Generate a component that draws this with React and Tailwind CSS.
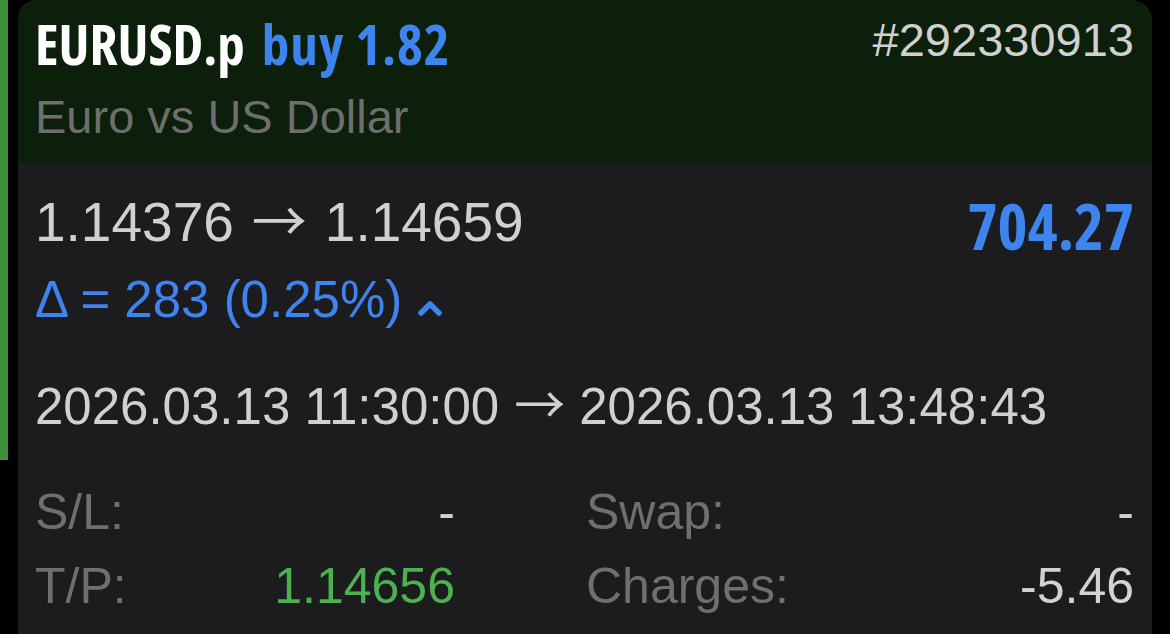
import React from 'react'

const sans = "font-['Liberation_Sans',Arial,sans-serif]"
const cond = "font-['Open_Sans','Noto_Sans',sans-serif] [font-stretch:78%]"

function Arrow({ className = 'mx-[18px]' }) {
  return <span className={`font-['Noto_Sans_CJK_JP',sans-serif] ${className}`}>→</span>
}

function Chevron() {
  return (
    <svg width="28" height="18" viewBox="0 0 28 18" className="ml-[14px] mb-[8px]">
      <polyline points="5,14 14,5 23,14" fill="none" stroke="#3d84ee" strokeWidth="5.5" strokeLinecap="round" strokeLinejoin="round" />
    </svg>
  )
}

function Row({ label, value, valueClass = 'text-[#d2d2d2]' }) {
  return (
    <div className="flex justify-between items-baseline">
      <span className="text-[#6f6f6f]">{label}</span>
      <span className={valueClass}>{value}</span>
    </div>
  )
}

export default function App() {
  return (
    <div className={`w-[1170px] h-[634px] bg-black flex overflow-hidden ${sans}`}>
      {/* side marker */}
      <div className="w-[8px] flex flex-col">
        <div className="h-[460px] bg-[#3e8f3a]" />
      </div>

      <div className="ml-[10px] w-[1134px] flex flex-col rounded-tl-[18px] rounded-tr-[20px] overflow-hidden">
        {/* Header */}
        <div className="h-[163px] bg-[#0b1f0a] pl-[17px] pr-[18px]">
          <div className="flex justify-between items-start">
            <div className={`pt-[16px] text-[55px] leading-none font-bold ${cond}`}>
              <span className="text-white">EURUSD.p</span>
              <span className="ml-[17px] text-[#3d84ee] tracking-[1px]">buy 1.82</span>
            </div>
            <div className="pt-[16px] text-[47px] leading-none text-[#d0d0d0]">#292330913</div>
          </div>
          <div className="mt-[22px] text-[47px] leading-none text-[#6e6e6e]">Euro vs US Dollar</div>
        </div>

        {/* Body */}
        <div className="flex-1 bg-[#1c1c1e] pl-[17px] pr-[18px]">
          <div className="flex justify-between items-start">
            <div>
              <div className="pt-[27px] flex items-baseline text-[55px] leading-none text-[#d0d0d0]">
                <span>1.14376</span>
                <Arrow />
                <span>1.14659</span>
              </div>
              <div className="mt-[24px] flex items-end text-[51px] leading-none text-[#3d84ee]">
                <span>Δ = 283 (0.25%)</span>
                <Chevron />
              </div>
            </div>
            <div className={`pt-[31px] text-[64px] leading-none font-bold text-[#3d84ee] ${cond}`}>704.27</div>
          </div>

          <div className="mt-[52px] flex items-baseline text-[51px] leading-none text-[#d0d0d0]">
            <span>2026.03.13 11:30:00</span>
            <Arrow className="ml-[15px] mr-[14px]" />
            <span>2026.03.13 13:48:43</span>
          </div>

          <div className="mt-[55px] grid grid-cols-[420px_1fr] gap-x-[131px] gap-y-[24px] text-[50px] leading-none">
            <Row label="S/L:" value="-" />
            <Row label="Swap:" value="-" />
            <Row label="T/P:" value="1.14656" valueClass="text-[#4db152]" />
            <Row label="Charges:" value="-5.46" />
          </div>
        </div>
      </div>
    </div>
  )
}
